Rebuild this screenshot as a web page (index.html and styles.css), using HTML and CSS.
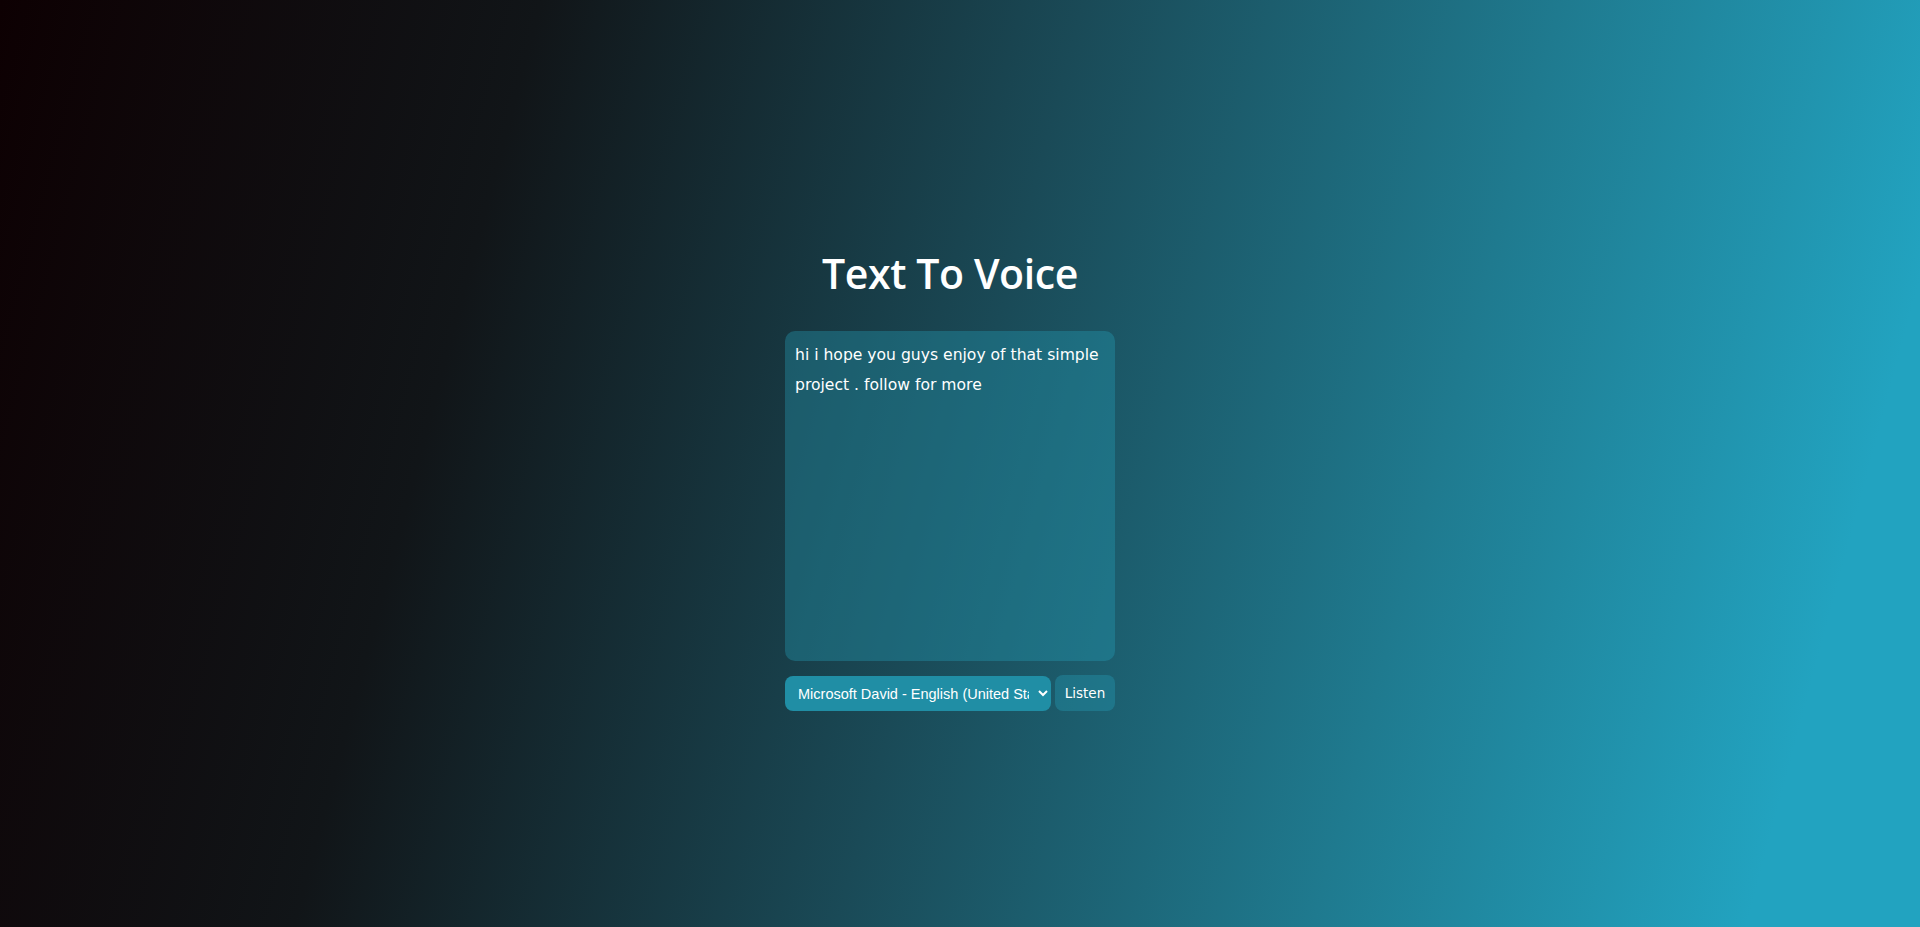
FILE: index.html
```html
<!DOCTYPE html>
<html lang="en">
<head>
<meta charset="utf-8">
<title>Text To Voice</title>
<link rel="stylesheet" href="styles.css">
</head>
<body>
<main class="app">
  <h1 class="title">Text To Voice</h1>
  <textarea class="text-input">hi i hope you guys enjoy of that simple project . follow for more</textarea>
  <div class="controls">
    <select class="voice-select">
      <option>Microsoft David - English (United States)</option>
    </select>
    <button class="listen-btn">Listen</button>
  </div>
</main>
</body>
</html>
```

FILE: styles.css
```css
* { box-sizing: border-box; }
html, body { margin: 0; height: 100%; }
body {
  background: linear-gradient(105deg, #0d0002 0%, #111518 25%, #1a4a57 50%, #1f7a8f 72%, #22a3c0 92%);
  font-family: "DejaVu Sans", "Open Sans", sans-serif;
  color: #fff;
  display: flex;
  justify-content: center;
  align-items: flex-start;
  padding-right: 20px;
}
.app {
  width: 330px;
  padding-top: 247px;
  display: flex;
  flex-direction: column;
  align-items: center;
}
.title {
  margin: 0 0 32px;
  font-family: "Open Sans", "DejaVu Sans", sans-serif;
  font-size: 41px;
  line-height: 52px;
  font-weight: 600;
  letter-spacing: -0.4px;
  text-align: center;
}
.text-input {
  display: block;
  width: 330px;
  height: 330px;
  border: none;
  outline: none;
  resize: none;
  border-radius: 10px;
  padding: 9px 10px;
  background: rgba(36, 160, 186, 0.35);
  color: #fff;
  font-family: "DejaVu Sans", "Open Sans", sans-serif;
  font-size: 15.6px;
  line-height: 30px;
}
.controls {
  display: flex;
  gap: 4px;
  width: 330px;
  margin-top: 15px;
}
.voice-select {
  width: 266px;
  height: 35px;
  border: none;
  outline: none;
  border-radius: 8px;
  background: #208ea5;
  color: #fff;
  font-family: "Liberation Sans", Arial, sans-serif;
  font-size: 14.5px;
  padding: 0 6px 0 9px;
}
.listen-btn {
  flex: 1;
  height: 36px;
  margin-top: -1px;
  border: none;
  border-radius: 8px;
  background: rgba(36, 160, 186, 0.35);
  color: #fff;
  font-family: "DejaVu Sans", "Open Sans", sans-serif;
  font-size: 13.5px;
  padding: 0;
}
```
